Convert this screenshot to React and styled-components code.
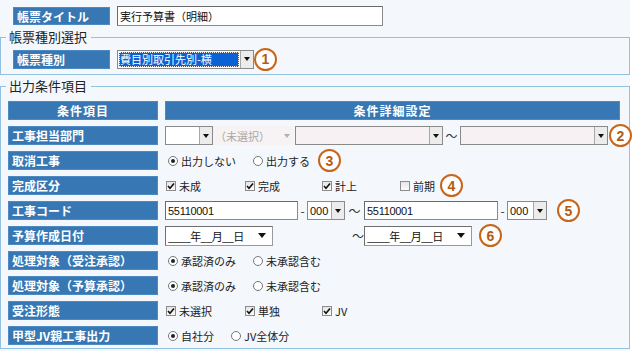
import React from "react";
import styled, { createGlobalStyle } from "styled-components";

const GlobalStyle = createGlobalStyle`
  html, body { margin: 0; padding: 0; background: #fff; }
  body {
    font-family: "Noto Sans CJK JP", "Noto Sans", sans-serif;
    color: #222;
  }
`;

const Page = styled.div`
  width: 630px;
  height: 351px;
  box-sizing: border-box;
  padding-top: 6px;
  background: #f4f8fd;
`;

const TitleRow = styled.div`
  display: flex;
  align-items: center;
  gap: 7px;
  padding-left: ${(p) => (p.$flush ? 0 : 13)}px;
  height: 20px;
`;

const Group = styled.fieldset`
  margin: 3px 0 0;
  padding: 0;
  border: 1px solid #93c2e0;
  min-width: 0;
`;

const Legend = styled.legend`
  margin-left: 5px;
  padding: 0 4px 0 3px;
  font-size: 13px;
  line-height: 16px;
  color: #222;
`;

const GroupBody = styled.div`
  padding: ${(p) => p.$pad};
`;

const Label = styled.div`
  box-sizing: border-box;
  width: ${(p) => (p.$w ? `${p.$w}px` : "auto")};
  height: ${(p) => p.$h || 19}px;
  display: flex;
  align-items: center;
  justify-content: ${(p) => (p.$center ? "center" : "flex-start")};
  padding-left: ${(p) => (p.$center ? 0 : 3)}px;
  background: #3777b3;
  border: 1px solid #4d89c2;
  color: #fff;
  font-size: 12px;
  font-weight: bold;
  letter-spacing: ${(p) => (p.$center ? "1px" : "0")};
  white-space: nowrap;
`;

const TextBox = styled.input`
  box-sizing: border-box;
  width: ${(p) => p.$w}px;
  height: ${(p) => p.$h || 19}px;
  margin: 0;
  padding: 0 2px;
  border: 1px solid #8a8a8a;
  border-top-color: #6a6a6a;
  border-left-color: #6a6a6a;
  background: #fff;
  font-family: ${(p) => (p.$num ? '"Liberation Sans", sans-serif' : '"Noto Sans CJK JP", sans-serif')};
  font-size: 11px;
  letter-spacing: ${(p) => (p.$num ? "-0.3px" : "0")};
  color: #111;
  outline: none;
`;

const Select = styled.div`
  box-sizing: border-box;
  width: ${(p) => p.$w}px;
  height: 19px;
  display: flex;
  align-items: stretch;
  border: ${(p) => (p.$plain ? "none" : "1px solid #8a8a8a")};
  background: ${(p) => p.$bg || "#fff"};
  flex-shrink: 0;
`;

const SelectValue = styled.div`
  flex: 1;
  display: flex;
  align-items: center;
  padding-left: 2px;
  font-family: ${(p) => (p.$num ? '"Liberation Sans", sans-serif' : '"Noto Sans CJK JP", sans-serif')};
  font-size: 11px;
  color: ${(p) => (p.$muted ? "#a8a8a8" : "#111")};
  white-space: nowrap;
  overflow: hidden;
`;

const HighlightValue = styled(SelectValue)`
  margin: 1px;
  padding-left: 1px;
  background: #0a62d4;
  outline: 1px dotted #f0f0f0;
  outline-offset: -1px;
  color: #fff;
`;

const DropButton = styled.div`
  box-sizing: border-box;
  width: 13px;
  display: flex;
  align-items: center;
  justify-content: center;
  background: ${(p) => (p.$flat ? "transparent" : "#ececec")};
  border-left: ${(p) => (p.$flat ? "none" : "1px solid #a8a8a8")};
  &::after {
    content: "";
    border-left: 3px solid transparent;
    border-right: 3px solid transparent;
    border-top: 4px solid ${(p) => (p.$muted ? "#b0b0b0" : "#111")};
  }
`;

const DateBox = styled(Select)`
  height: 20px;
  border: 1px solid #9a9a9a;
  border-top-color: #6e6e6e;
  border-left-color: #6e6e6e;
`;

const DateValue = styled(SelectValue)`
  font-size: 11px;
  letter-spacing: -0.6px;
`;

const DateArrow = styled(DropButton)`
  width: 20px;
  background: transparent;
  border-left: none;
  &::after {
    border-left-width: 4px;
    border-right-width: 4px;
    border-top-width: 5px;
  }
`;

const Grid = styled.div`
  display: grid;
  grid-template-columns: 150px 455px;
  grid-auto-rows: 19px;
  column-gap: 7px;
  row-gap: 6px;
`;

const Cell = styled.div`
  display: flex;
  align-items: center;
  padding-left: ${(p) => p.$pl || 0}px;
  font-size: 11px;
  white-space: nowrap;
  overflow: visible;
`;

const Sep = styled.span`
  display: inline-block;
  width: ${(p) => p.$w}px;
  text-align: ${(p) => p.$align || "center"};
  font-size: 12px;
  color: #333;
  flex-shrink: 0;
`;

const Option = styled.label`
  display: flex;
  align-items: center;
  gap: 3px;
  width: ${(p) => (p.$w ? `${p.$w}px` : "auto")};
  margin-right: ${(p) => p.$mr || 0}px;
  font-size: 11px;
  color: #222;
  flex-shrink: 0;
`;

const RadioMark = styled.span`
  box-sizing: border-box;
  width: 10px;
  height: 10px;
  border-radius: 50%;
  border: 1px solid #777;
  background: #fff;
  display: flex;
  align-items: center;
  justify-content: center;
  &::after {
    content: "";
    width: 4px;
    height: 4px;
    border-radius: 50%;
    background: ${(p) => (p.$on ? "#222" : "transparent")};
  }
`;

const CheckMark = styled.span`
  box-sizing: border-box;
  width: 10px;
  height: 10px;
  border: 1px solid #8c8c8c;
  background: linear-gradient(#e6e6e6, #fbfbfb);
  display: flex;
  align-items: center;
  justify-content: center;
  svg { display: block; }
`;

const Marker = styled.span`
  box-sizing: border-box;
  width: 23px;
  height: 23px;
  margin-left: ${(p) => p.$ml || 0}px;
  border-radius: 50%;
  border: 2px solid #c7661a;
  background: #fff;
  display: flex;
  align-items: center;
  justify-content: center;
  color: #b45a12;
  font-family: "Liberation Sans", sans-serif;
  font-size: 14px;
  font-weight: bold;
  flex-shrink: 0;
`;

const Radio = ({ on, label, mr }) => (
  <Option $mr={mr}>
    <RadioMark $on={on} />
    {label}
  </Option>
);

const Check = ({ on, label, w }) => (
  <Option $w={w}>
    <CheckMark>
      {on && (
        <svg width="8" height="8" viewBox="0 0 8 8">
          <path d="M1 4 L3 6.2 L7 1.6" fill="none" stroke="#111" strokeWidth="1.6" />
        </svg>
      )}
    </CheckMark>
    {label}
  </Option>
);

const DropSelect = ({ w, value, bg, num }) => (
  <Select $w={w} $bg={bg}>
    <SelectValue $num={num}>{value}</SelectValue>
    <DropButton />
  </Select>
);

const DatePick = () => (
  <DateBox $w={108}>
    <DateValue>____年__月__日</DateValue>
    <DateArrow />
  </DateBox>
);

const rows = [
  {
    label: "工事担当部門",
    content: (
      <>
        <DropSelect w={48} value="" />
        <Select $w={80} $plain $bg="#f7f3f5">
          <SelectValue $muted>（未選択）</SelectValue>
          <DropButton $flat $muted />
        </Select>
        <Sep $w={2} />
        <DropSelect w={148} value="" bg="#f8f1f4" />
        <Sep $w={17}>～</Sep>
        <DropSelect w={148} value="" bg="#f8f1f4" />
        <Marker $ml={1}>2</Marker>
      </>
    ),
  },
  {
    label: "取消工事",
    content: (
      <>
        <Radio on label="出力しない" mr={17} />
        <Radio label="出力する" mr={8} />
        <Marker>3</Marker>
      </>
    ),
  },
  {
    label: "完成区分",
    content: (
      <>
        <Check on label="未成" w={79} />
        <Check on label="完成" w={77} />
        <Check on label="計上" w={78} />
        <Check label="前期" />
        <Marker $ml={5}>4</Marker>
      </>
    ),
  },
  {
    label: "工事コード",
    content: (
      <>
        <TextBox $w={133} $num readOnly value="55110001" />
        <Sep $w={9}>-</Sep>
        <DropSelect w={38} value="000" num />
        <Sep $w={19}>～</Sep>
        <TextBox $w={134} $num readOnly value="55110001" />
        <Sep $w={9}>-</Sep>
        <DropSelect w={40} value="000" num />
        <Marker $ml={10}>5</Marker>
      </>
    ),
  },
  {
    label: "予算作成日付",
    content: (
      <>
        <DatePick />
        <Sep $w={91} $align="right">～</Sep>
        <DatePick />
        <Marker $ml={7}>6</Marker>
      </>
    ),
  },
  {
    label: "処理対象（受注承認）",
    content: (
      <>
        <Radio on label="承認済のみ" mr={17} />
        <Radio label="未承認含む" />
      </>
    ),
  },
  {
    label: "処理対象（予算承認）",
    content: (
      <>
        <Radio on label="承認済のみ" mr={17} />
        <Radio label="未承認含む" />
      </>
    ),
  },
  {
    label: "受注形態",
    content: (
      <>
        <Check on label="未選択" w={79} />
        <Check on label="単独" w={77} />
        <Check on label="JV" />
      </>
    ),
  },
  {
    label: "甲型JV親工事出力",
    content: (
      <>
        <Radio on label="自社分" mr={17} />
        <Radio label="JV全体分" />
      </>
    ),
  },
];

const radioRows = [1, 5, 6, 8];

export default function App() {
  return (
    <>
      <GlobalStyle />
      <Page>
        <TitleRow>
          <Label $w={97} $h={18}>帳票タイトル</Label>
          <TextBox $w={266} $h={20} readOnly value="実行予算書（明細）" />
        </TitleRow>

        <Group>
          <Legend>帳票種別選択</Legend>
          <GroupBody $pad="4px 0 5px 12px">
            <TitleRow $flush>
              <Label $w={97} $h={19}>帳票種別</Label>
              <Select $w={137}>
                <HighlightValue>費目別取引先別-横</HighlightValue>
                <DropButton />
              </Select>
              <Marker $ml={-7}>1</Marker>
            </TitleRow>
          </GroupBody>
        </Group>

        <Group>
          <Legend>出力条件項目</Legend>
          <GroupBody $pad="7px 0 3px 7px">
            <Grid>
              <Label $center>条件項目</Label>
              <Label $center>条件詳細設定</Label>
              {rows.map((r, i) => (
                <React.Fragment key={r.label}>
                  <Label>{r.label}</Label>
                  <Cell $pl={radioRows.includes(i) ? 3 : i === 2 || i === 7 ? 1 : 0}>
                    {r.content}
                  </Cell>
                </React.Fragment>
              ))}
            </Grid>
          </GroupBody>
        </Group>
      </Page>
    </>
  );
}
